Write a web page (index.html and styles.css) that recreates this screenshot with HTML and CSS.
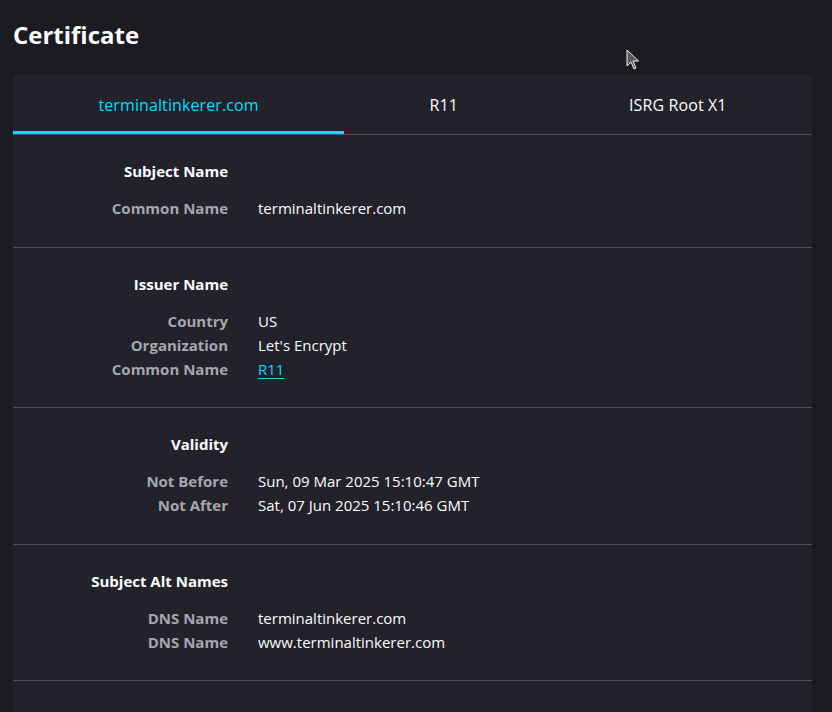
FILE: index.html
```html
<!DOCTYPE html>
<html lang="en">
<head>
<meta charset="utf-8">
<title>Certificate</title>
<link rel="stylesheet" href="styles.css">
</head>
<body>
<main class="page">
  <h1 class="title">Certificate</h1>
  <section class="card">
    <nav class="tabs">
      <div class="tab active">terminaltinkerer.com</div>
      <div class="tab">R11</div>
      <div class="tab">ISRG Root X1</div>
    </nav>
    <div class="section">
      <div class="heading">Subject Name</div>
      <div class="rows">
        <div class="label">Common Name</div><div class="value">terminaltinkerer.com</div>
      </div>
    </div>
    <div class="section">
      <div class="heading">Issuer Name</div>
      <div class="rows">
        <div class="label">Country</div><div class="value">US</div>
        <div class="label">Organization</div><div class="value">Let's Encrypt</div>
        <div class="label">Common Name</div><div class="value"><a class="link" href="#">R11</a></div>
      </div>
    </div>
    <div class="section">
      <div class="heading">Validity</div>
      <div class="rows">
        <div class="label">Not Before</div><div class="value">Sun, 09 Mar 2025 15:10:47 GMT</div>
        <div class="label">Not After</div><div class="value">Sat, 07 Jun 2025 15:10:46 GMT</div>
      </div>
    </div>
    <div class="section">
      <div class="heading">Subject Alt Names</div>
      <div class="rows">
        <div class="label">DNS Name</div><div class="value">terminaltinkerer.com</div>
        <div class="label">DNS Name</div><div class="value">www.terminaltinkerer.com</div>
      </div>
    </div>
    <div class="section empty"></div>
  </section>
</main>
<svg class="cursor" width="14" height="22" viewBox="0 0 14 22" aria-hidden="true">
  <path d="M1 1 L1 17 L5 13 L8 20 L10 19 L7 12 L12.5 12 Z" fill="#5a5a5e" stroke="#f0f0f0" stroke-width="1" stroke-linejoin="miter"/>
</svg>
</body>
</html>
```
FILE: styles.css
```css
* { box-sizing: border-box; }
html, body {
  margin: 0;
  padding: 0;
  background: #1c1b22;
  color: #fbfbfe;
  font-family: "Open Sans", "Noto Sans", sans-serif;
  font-size: 15px;
  line-height: 24px;
  overflow: hidden;
  height: 712px;
}
.page {
  width: 799px;
  margin-left: 13px;
}
.title {
  margin: 0;
  padding-top: 18px;
  height: 75px;
  font-size: 24px;
  line-height: 34px;
  font-weight: 700;
  color: #fbfbfe;
}
.card {
  background: #23222b;
  border-radius: 4px;
  min-height: 660px;
}
.tabs {
  display: flex;
  border-bottom: 1px solid #4f4f58;
}
.tab {
  flex: 1 1 auto;
  text-align: center;
  padding: 18px 0 14px;
  border-bottom: 3px solid transparent;
  color: #fbfbfe;
  font-size: 16px;
  letter-spacing: 0.1px;
}
.tab.active {
  color: #00ddff;
  border-bottom-color: #00ddff;
}
.section {
  padding: 24px 0 26.5px;
  border-bottom: 1px solid #4f4f58;
}
.section.empty { border-bottom: none; }
.heading {
  width: 215px;
  text-align: right;
  font-weight: 700;
  color: #fbfbfe;
  margin-bottom: 13px;
}
.rows {
  display: grid;
  grid-template-columns: 215px 1fr;
  column-gap: 30px;
}
.label {
  text-align: right;
  font-weight: 700;
  color: #a6a6ad;
}
.value { color: #fbfbfe; }
.link {
  color: #00ddff;
  text-decoration: underline;
  text-underline-offset: 3px;
}
.cursor {
  position: absolute;
  left: 626px;
  top: 49px;
}
```
